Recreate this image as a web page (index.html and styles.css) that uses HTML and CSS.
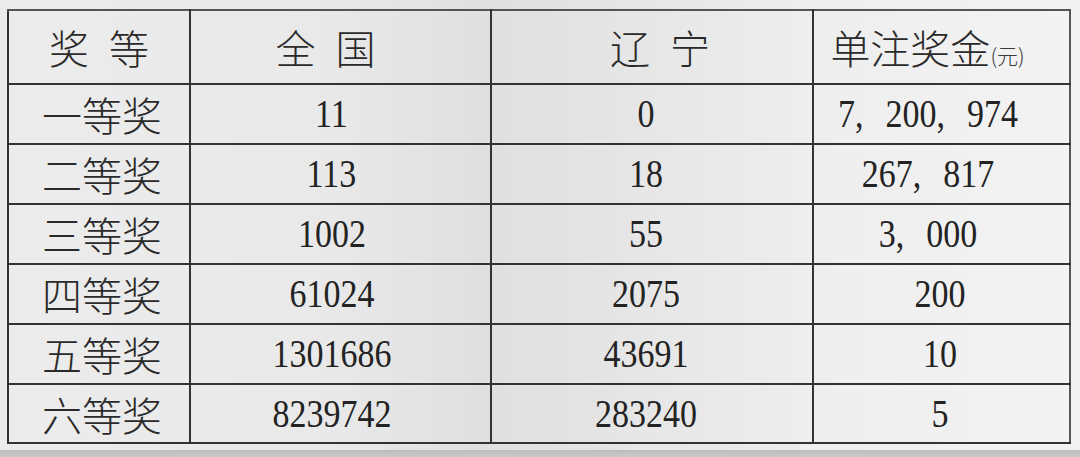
FILE: index.html
```html
<!DOCTYPE html>
<html lang="zh-CN">
<head>
<meta charset="utf-8">
<title>开奖详情</title>
<link rel="stylesheet" href="styles.css">
</head>
<body>
<div class="sheet">
  <table class="prize">
    <colgroup>
      <col class="c1"><col class="c2"><col class="c3"><col class="c4">
    </colgroup>
    <thead>
      <tr class="head">
        <th class="cn k1">奖&ensp;等</th>
        <th class="cn k2">全&ensp;国</th>
        <th class="cn k3">辽&ensp;宁</th>
        <th class="cn k4">单注奖金<span class="unit">(元)</span></th>
      </tr>
    </thead>
    <tbody>
      <tr><td class="cn k1">一等奖</td><td class="num k2"><span>11</span></td><td class="num k3"><span>0</span></td><td class="num k4 grouped"><span>7<i>,</i>200<i>,</i>974</span></td></tr>
      <tr><td class="cn k1">二等奖</td><td class="num k2"><span>113</span></td><td class="num k3"><span>18</span></td><td class="num k4 grouped"><span>267<i>,</i>817</span></td></tr>
      <tr><td class="cn k1">三等奖</td><td class="num k2"><span>1002</span></td><td class="num k3"><span>55</span></td><td class="num k4 grouped"><span>3<i>,</i>000</span></td></tr>
      <tr><td class="cn k1">四等奖</td><td class="num k2"><span>61024</span></td><td class="num k3"><span>2075</span></td><td class="num k4"><span>200</span></td></tr>
      <tr class="r5"><td class="cn k1">五等奖</td><td class="num k2"><span>1301686</span></td><td class="num k3"><span>43691</span></td><td class="num k4"><span>10</span></td></tr>
      <tr class="r6"><td class="cn k1">六等奖</td><td class="num k2"><span>8239742</span></td><td class="num k3"><span>283240</span></td><td class="num k4"><span>5</span></td></tr>
    </tbody>
  </table>
</div>
<div class="desk"></div>
</body>
</html>
```
FILE: styles.css
```css
html, body {
  margin: 0;
  padding: 0;
}
body {
  width: 1080px;
  height: 457px;
  overflow: hidden;
  background: linear-gradient(90deg, #ececec 0%, #e9e9e9 30%, #e0e0e0 45%, #e4e4e4 55%, #eeeeee 75%, #f3f3f3 100%);
  color: #232323;
}
.sheet {
  height: 450px;
  padding: 9px 0 0 7px;
  box-sizing: border-box;
}
.prize {
  border-collapse: collapse;
  table-layout: fixed;
  width: 1062px;
}
.c1 { width: 182px; }
.c2 { width: 301px; }
.c3 { width: 322px; }
.c4 { width: 257px; }
.prize th, .prize td {
  border: 2px solid #333333;
  padding: 0;
  text-align: center;
  vertical-align: middle;
  font-weight: normal;
  height: 58px;
}
.head th {
  height: 72px;
  border-top-color: #555555;
}
.prize tr > :last-child { border-right-color: #555555; }
.r6 td { height: 57px; }
.prize .cn {
  font-family: "Noto Sans CJK SC", "Noto Sans CJK JP", sans-serif;
  font-size: 40px;
  font-weight: 300;
  line-height: 1;
  color: #2a2a2a;
}
.unit {
  font-size: 21px;
  color: #3a3a3a;
}
.num {
  font-family: "Liberation Serif", "Times New Roman", serif;
  font-size: 40px;
  line-height: 1;
}
.num span {
  display: inline-block;
  transform: scaleX(0.85);
}
.num i {
  font-style: normal;
  margin-right: 26px;
}
td.k1 { padding-left: 6px; }
.k2.num { padding-right: 18px; }
.k3.num { padding-right: 12px; }
.k4.num { padding-right: 4px; }
.k4.grouped { padding-right: 28px; }
th.k2 { padding-right: 30px; }
th.k3 { padding-left: 16px; }
th.k4 { padding-right: 28px; }
.desk {
  height: 7px;
  background: linear-gradient(180deg, #bdbdbd 0%, #c9c9c9 100%);
}
```
